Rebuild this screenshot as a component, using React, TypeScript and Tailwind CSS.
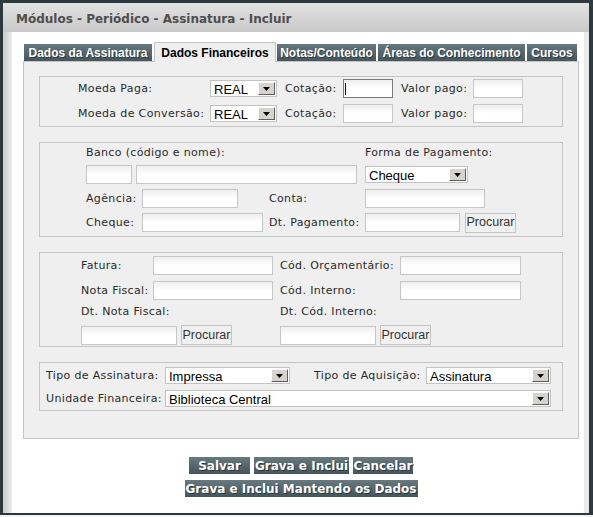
import React from "react";

const lbl = "text-[11px] leading-none tracking-[0.35px] text-[#2a2a2a] font-['DejaVu_Sans',sans-serif] whitespace-nowrap";

function Inp({ cls, focused }: { cls: string; focused?: boolean }) {
  return (
    <div
      className={`${cls} h-[19px] shrink-0 bg-gradient-to-b from-[#eeeeee] via-white to-white border ${
        focused ? "border-[#7b7b7b]" : "border-[#c6c6c6]"
      } relative`}
    >
      {focused && <div className="absolute left-[1px] top-[3px] w-[1px] h-[12px] bg-black" />}
    </div>
  );
}

function Sel({ cls, text }: { cls: string; text: string }) {
  return (
    <div className={`${cls} h-[17px] shrink-0 bg-white border border-[#c3c3c3] flex items-center justify-between`}>
      <span className="pl-[3px] pt-[1px] text-[13px] leading-none text-black font-['Liberation_Sans',Arial,sans-serif]">
        {text}
      </span>
      <span className="w-[17px] h-[13px] mr-[1px] bg-[#d6d3ce] border-t border-l border-t-white border-l-white border-r border-b border-r-[#5e5e5e] border-b-[#5e5e5e] flex items-center justify-center">
        <svg width="7" height="4" viewBox="0 0 7 4">
          <polygon points="0,0 7,0 3.5,4" fill="#000" />
        </svg>
      </span>
    </div>
  );
}

function Procurar({ cls = "" }: { cls?: string }) {
  return (
    <div
      className={`${cls} w-[51px] h-[20px] shrink-0 bg-[#f0f0f0] border border-[#c3c3c3] flex items-center justify-center text-[12.5px] leading-none text-[#333] font-['Liberation_Sans',Arial,sans-serif]`}
    >
      Procurar
    </div>
  );
}

function Btn({ cls, children }: { cls: string; children: React.ReactNode }) {
  return (
    <div
      className={`${cls} h-[17px] flex items-center justify-center bg-gradient-to-b from-[#687a80] to-[#44555b] text-white text-[12px] font-bold leading-none font-['DejaVu_Sans',sans-serif] whitespace-nowrap [text-shadow:1px_1px_0_#2b383d]`}
    >
      {children}
    </div>
  );
}

function Tab({ cls, children }: { cls: string; children: React.ReactNode }) {
  return (
    <div
      className={`${cls} h-[17px] flex items-center justify-center bg-gradient-to-b from-[#667880] to-[#46565c] text-white text-[12px] font-bold leading-none font-['Liberation_Sans',Arial,sans-serif] whitespace-nowrap [text-shadow:1px_1px_0_#2b383d]`}
    >
      {children}
    </div>
  );
}

export default function App() {
  return (
    <div className="w-[593px] h-[517px] bg-[#f2f2f2] overflow-hidden">
      <div className="h-[515px] bg-white border-t-[3px] border-l-[3px] border-r-[4px] border-b-[2px] border-[#2c3a40] flex flex-col">
        {/* Title bar */}
        <div className="h-[29px] shrink-0 bg-gradient-to-b from-[#e2e2e2] to-[#c9c9c9] pl-[13px] pt-[2px] flex items-center">
          <span className="text-[12px] font-bold text-[#4e4e4e] font-['DejaVu_Sans',sans-serif] whitespace-nowrap">
            Módulos - Periódico - Assinatura - Incluir
          </span>
        </div>
        <div className="flex-1 flex">
          <div className="w-[9px] shrink-0 bg-gradient-to-r from-[#cdcdcd] via-[#dadada] to-[#ececec]" />
          <div className="flex-1 pl-[11px]">
            {/* Tabs */}
            <div className="flex items-end h-[29px] pl-[1px]">
              <Tab cls="w-[128px]">Dados da Assinatura</Tab>
              <div className="ml-[2px] w-[122px] h-[20px] -mb-[1px] relative z-10 bg-[#efefef] border-t border-l border-r border-[#c5c5c5] flex items-center justify-center text-[12px] font-bold leading-none text-black font-['Liberation_Sans',Arial,sans-serif] whitespace-nowrap">
                Dados Financeiros
              </div>
              <Tab cls="ml-[1px] w-[99px]">Notas/Conteúdo</Tab>
              <Tab cls="ml-[2px] w-[147px]">Áreas do Conhecimento</Tab>
              <Tab cls="ml-[2px] w-[50px]">Cursos</Tab>
            </div>
            {/* Panel */}
            <div className="w-[556px] h-[378px] bg-[#efefef] border border-[#c5c5c5] pl-[15px] pt-[14px] flex flex-col gap-[15px]">
              {/* Fieldset 1 */}
              <div className="w-[524px] h-[51px] border border-[#c4c4c4] pl-[38px] pt-[2px] flex flex-col gap-[6px]">
                <div className="flex items-center h-[19px]">
                  <span className={`${lbl} w-[132px]`}>Moeda Paga:</span>
                  <Sel cls="w-[67px]" text="REAL" />
                  <span className={`${lbl} ml-[8px] w-[58px]`}>Cotação:</span>
                  <Inp cls="w-[50px]" focused />
                  <span className={`${lbl} ml-[8px] w-[72px]`}>Valor pago:</span>
                  <Inp cls="w-[50px]" />
                </div>
                <div className="flex items-center h-[19px]">
                  <span className={`${lbl} w-[132px]`}>Moeda de Conversão:</span>
                  <Sel cls="w-[67px]" text="REAL" />
                  <span className={`${lbl} ml-[8px] w-[58px]`}>Cotação:</span>
                  <Inp cls="w-[50px]" />
                  <span className={`${lbl} ml-[8px] w-[72px]`}>Valor pago:</span>
                  <Inp cls="w-[50px]" />
                </div>
              </div>
              {/* Fieldset 2 */}
              <div className="w-[524px] h-[95px] border border-[#c4c4c4] pl-[46px] pt-[2px] flex flex-col gap-[5px]">
                <div className="flex items-center h-[15px]">
                  <span className={`${lbl} w-[279px]`}>Banco (código e nome):</span>
                  <span className={lbl}>Forma de Pagamento:</span>
                </div>
                <div className="flex items-center h-[19px]">
                  <Inp cls="w-[46px]" />
                  <Inp cls="ml-[4px] w-[221px]" />
                  <Sel cls="ml-[8px] w-[103px]" text="Cheque" />
                </div>
                <div className="flex items-center h-[19px]">
                  <span className={`${lbl} w-[56px]`}>Agência:</span>
                  <Inp cls="w-[96px]" />
                  <span className={`${lbl} ml-[31px] w-[96px]`}>Conta:</span>
                  <Inp cls="w-[120px]" />
                </div>
                <div className="flex items-center h-[19px]">
                  <span className={`${lbl} w-[56px]`}>Cheque:</span>
                  <Inp cls="w-[121px]" />
                  <span className={`${lbl} ml-[6px] w-[96px]`}>Dt. Pagamento:</span>
                  <Inp cls="w-[95px]" />
                  <Procurar cls="ml-[5px]" />
                </div>
              </div>
              {/* Fieldset 3 */}
              <div className="w-[524px] h-[95px] border border-[#c4c4c4] pl-[41px] pt-[3px] flex flex-col">
                <div className="flex items-center h-[19px]">
                  <span className={`${lbl} w-[72px]`}>Fatura:</span>
                  <Inp cls="w-[120px]" />
                  <span className={`${lbl} ml-[7px] w-[120px]`}>Cód. Orçamentário:</span>
                  <Inp cls="w-[121px]" />
                </div>
                <div className="flex items-center h-[19px] mt-[6px]">
                  <span className={`${lbl} w-[72px]`}>Nota Fiscal:</span>
                  <Inp cls="w-[120px]" />
                  <span className={`${lbl} ml-[7px] w-[120px]`}>Cód. Interno:</span>
                  <Inp cls="w-[121px]" />
                </div>
                <div className="flex items-center h-[15px] mt-[4px]">
                  <span className={`${lbl} w-[199px]`}>Dt. Nota Fiscal:</span>
                  <span className={lbl}>Dt. Cód. Interno:</span>
                </div>
                <div className="flex items-center h-[20px] mt-[6px]">
                  <Inp cls="w-[96px]" />
                  <Procurar cls="ml-[4px]" />
                  <Inp cls="ml-[48px] w-[96px]" />
                  <Procurar cls="ml-[4px]" />
                </div>
              </div>
              {/* Fieldset 4 */}
              <div className="w-[524px] h-[49px] border border-[#c4c4c4] pl-[6px] pt-[4px] flex flex-col gap-[6px]">
                <div className="flex items-center h-[17px]">
                  <span className={`${lbl} w-[119px]`}>Tipo de Assinatura:</span>
                  <Sel cls="w-[125px]" text="Impressa" />
                  <span className={`${lbl} ml-[24px] w-[112px]`}>Tipo de Aquisição:</span>
                  <Sel cls="w-[125px]" text="Assinatura" />
                </div>
                <div className="flex items-center h-[17px]">
                  <span className={`${lbl} w-[119px]`}>Unidade Financeira:</span>
                  <Sel cls="w-[386px]" text="Biblioteca Central" />
                </div>
              </div>
            </div>
            {/* Buttons */}
            <div className="w-[556px] pt-[18px] flex flex-col items-center gap-[6px]">
              <div className="flex gap-[4px]">
                <Btn cls="w-[61px]">Salvar</Btn>
                <Btn cls="w-[95px]">Grava e Inclui</Btn>
                <Btn cls="w-[60px]">Cancelar</Btn>
              </div>
              <Btn cls="w-[233px]">Grava e Inclui Mantendo os Dados</Btn>
            </div>
          </div>
          <div className="w-[5px] shrink-0 bg-[#e9e9e9]" />
        </div>
      </div>
    </div>
  );
}
